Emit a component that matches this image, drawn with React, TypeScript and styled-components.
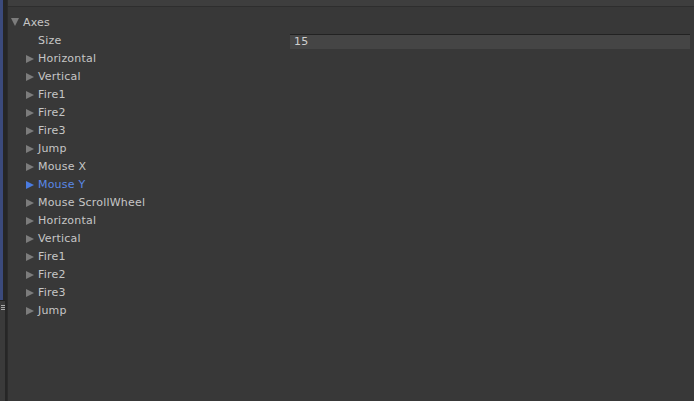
import React from "react";
import styled, { createGlobalStyle } from "styled-components";

const Global = createGlobalStyle`
  html, body { margin: 0; padding: 0; background: #383838; }
  body { font-family: "DejaVu Sans", "Liberation Sans", sans-serif; font-size: 11px; letter-spacing: 0.2px; }
`;

const Page = styled.div`
  display: flex;
  width: 694px;
  height: 401px;
  overflow: hidden;
  background: #383838;
`;

const SideStrip = styled.div`
  width: 7px;
  display: flex;
  flex-direction: column;
  background: #262626;
  border-right: 1px solid #2b2b2b;
`;

const SideBlue = styled.div`
  height: 300px;
  width: 3px;
  background: #3b4a7c;
`;

const SideGrey = styled.div`
  flex: 1;
  width: 5px;
  background: #3a3a3a;
  border-top: 1px solid #222;
  display: flex;
  flex-direction: column;
  align-items: center;
  padding-top: 4px;
  gap: 1px;
`;

const Grip = styled.div`
  width: 4px;
  height: 1px;
  background: #aaa;
`;

const Main = styled.div`
  flex: 1;
  display: flex;
  flex-direction: column;
`;

const TopBar = styled.div`
  height: 6px;
  background: #3e3e3e;
  border-bottom: 1px solid #2e2e2e;
`;

const List = styled.div`
  display: flex;
  flex-direction: column;
  padding-top: 6px;
`;

const Row = styled.div<{ $indent: number }>`
  height: 18px;
  display: flex;
  align-items: center;
  padding-left: ${(p) => p.$indent}px;
  color: #c6c6c6;
  white-space: nowrap;
`;

const Label = styled.span<{ $selected?: boolean }>`
  color: ${(p) => (p.$selected ? "#5a88e6" : "#c6c6c6")};
`;

const Arrow = styled.span<{ $selected?: boolean; $open?: boolean }>`
  width: 12px;
  height: 18px;
  display: flex;
  align-items: center;
  flex-shrink: 0;
  &::before {
    content: "";
    display: block;
    width: 0;
    height: 0;
    ${(p) =>
      p.$open
        ? `border-left: 4px solid transparent; border-right: 4px solid transparent; border-top: 8px solid #7c7c7c; margin-top: -1px;`
        : `border-top: 4px solid transparent; border-bottom: 4px solid transparent; border-left: 8px solid ${
            p.$selected ? "#4a7be0" : "#7c7c7c"
          }; margin-top: 1px;`}
  }
`;

const Spacer = styled.span`
  width: 12px;
  flex-shrink: 0;
`;

const FieldLabel = styled.span`
  width: 252px;
  flex-shrink: 0;
`;

const NumberField = styled.div`
  width: 396px;
  height: 14px;
  background: #454545;
  border-top: 1px solid #222;
  color: #cfcfcf;
  padding-left: 4px;
  box-sizing: content-box;
  display: flex;
  align-items: center;
  margin-top: 2px;
`;

const items = [
  "Horizontal",
  "Vertical",
  "Fire1",
  "Fire2",
  "Fire3",
  "Jump",
  "Mouse X",
  "Mouse Y",
  "Mouse ScrollWheel",
  "Horizontal",
  "Vertical",
  "Fire1",
  "Fire2",
  "Fire3",
  "Jump",
];

export default function App() {
  return (
    <>
      <Global />
      <Page>
        <SideStrip>
          <SideBlue />
          <SideGrey>
            <Grip />
            <Grip />
            <Grip />
          </SideGrey>
        </SideStrip>
        <Main>
          <TopBar />
          <List>
            <Row $indent={3}>
              <Arrow $open />
              <Label>Axes</Label>
            </Row>
            <Row $indent={18}>
              <Spacer />
              <FieldLabel>Size</FieldLabel>
              <NumberField>15</NumberField>
            </Row>
            {items.map((name, i) => {
              const sel = name === "Mouse Y";
              return (
                <Row key={i} $indent={18}>
                  <Arrow $selected={sel} />
                  <Label $selected={sel}>{name}</Label>
                </Row>
              );
            })}
          </List>
        </Main>
      </Page>
    </>
  );
}
